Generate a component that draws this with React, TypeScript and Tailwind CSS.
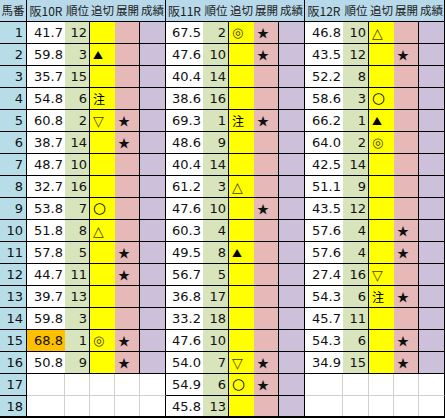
type Row = { v: string; r: string; m?: string; s?: boolean; hl?: boolean } | null;

const races: { name: string; w: string[]; rows: Row[] }[] = [
  {
    name: "阪10R",
    w: ["w-[38px]", "w-[25px]", "w-[25px]", "w-[25px]", "w-[26px]"],
    rows: [
      { v: "41.7", r: "12" },
      { v: "59.8", r: "3", m: "▲" },
      { v: "35.7", r: "15" },
      { v: "54.8", r: "6", m: "注" },
      { v: "60.8", r: "2", m: "▽", s: true },
      { v: "38.7", r: "14", s: true },
      { v: "48.7", r: "10" },
      { v: "32.7", r: "16" },
      { v: "53.8", r: "7", m: "○" },
      { v: "51.8", r: "8", m: "△" },
      { v: "57.8", r: "5", s: true },
      { v: "44.7", r: "11", s: true },
      { v: "39.7", r: "13" },
      { v: "59.8", r: "3" },
      { v: "68.8", r: "1", m: "◎", s: true, hl: true },
      { v: "50.8", r: "9", s: true },
      null,
      null,
    ],
  },
  {
    name: "阪11R",
    w: ["w-[37px]", "w-[26px]", "w-[25px]", "w-[25px]", "w-[26px]"],
    rows: [
      { v: "67.5", r: "2", m: "◎", s: true },
      { v: "47.6", r: "10", s: true },
      { v: "40.4", r: "14" },
      { v: "38.6", r: "16" },
      { v: "69.3", r: "1", m: "注", s: true },
      { v: "48.6", r: "9" },
      { v: "40.4", r: "14" },
      { v: "61.2", r: "3", m: "△" },
      { v: "47.6", r: "10", s: true },
      { v: "60.3", r: "4" },
      { v: "49.5", r: "8", m: "▲" },
      { v: "56.7", r: "5" },
      { v: "36.8", r: "17" },
      { v: "33.2", r: "18" },
      { v: "47.6", r: "10" },
      { v: "54.0", r: "7", m: "▽", s: true },
      { v: "54.9", r: "6", m: "○", s: true },
      { v: "45.8", r: "13" },
    ],
  },
  {
    name: "阪12R",
    w: ["w-[38px]", "w-[26px]", "w-[25px]", "w-[25px]", "w-[26px]"],
    rows: [
      { v: "46.8", r: "10", m: "△" },
      { v: "43.5", r: "12", s: true },
      { v: "52.2", r: "8" },
      { v: "58.6", r: "3", m: "○" },
      { v: "66.2", r: "1", m: "▲" },
      { v: "64.0", r: "2", m: "◎" },
      { v: "42.5", r: "14" },
      { v: "51.1", r: "9" },
      { v: "43.5", r: "12" },
      { v: "57.6", r: "4", s: true },
      { v: "57.6", r: "4", s: true },
      { v: "27.4", r: "16", m: "▽" },
      { v: "54.3", r: "6", m: "注", s: true },
      { v: "45.7", r: "11" },
      { v: "54.3", r: "6", s: true },
      { v: "34.9", r: "15", s: true },
      null,
      null,
    ],
  },
];

const heads = ["順位", "追切", "展開", "成績"];
const bgs = ["bg-white", "bg-[#d8e4bc]", "bg-[#ffff00]", "bg-[#e6b8b7]", "bg-[#ccc0da]"];
const rightLine = ["", "border-r border-r-black", "", "border-r border-r-black", "border-r border-r-black"];
const emptyRight = [
  "border-r border-r-[#d0d0d0]",
  "border-r border-r-[#d0d0d0]",
  "border-r border-r-[#d0d0d0]",
  "border-r border-r-[#d0d0d0]",
  "border-r border-r-black",
];

const markStyle = (m: string) => {
  if (m === "注") return "text-black text-[12px] font-['Noto_Sans_CJK_JP',sans-serif]";
  if (m === "▲") return "text-black text-[10px] font-['Noto_Sans_CJK_JP',sans-serif]";
  if (m === "◎") return "text-[#4a4200] text-[13px] font-['DejaVu_Sans',sans-serif]";
  if (m === "○") return "text-black text-[15px] font-['DejaVu_Sans',sans-serif]";
  return "text-[#4a4200] text-[14px] font-['DejaVu_Sans',sans-serif]";
};

export default function App() {
  return (
    <div className="w-[445px] h-[418px] bg-white font-['DejaVu_Sans','Noto_Sans_CJK_JP',sans-serif] text-[13px] text-[#111] leading-none">
      <div className="flex flex-col border-b-2 border-black w-[445px]">
        {/* header */}
        <div className="flex h-[22px] bg-[#b7d9ea] border-b border-black font-['Noto_Sans_CJK_JP',sans-serif] text-[11.5px] text-[#222]">
          <div className="w-[27px] shrink-0 flex items-center justify-center overflow-hidden whitespace-nowrap border-r border-black">
            馬番
          </div>
          {races.map((race) =>
            [race.name, ...heads].map((h, i) => (
              <div
                key={race.name + h}
                className={`${race.w[i]} shrink-0 flex items-center justify-center overflow-hidden whitespace-nowrap ${
                  i === 4 ? "border-r border-black" : ""
                } ${i === 0 ? "text-[12px]" : ""}`}
              >
                {h}
              </div>
            ))
          )}
        </div>

        {Array.from({ length: 18 }, (_, ri) => {
          const last = ri === 17;
          return (
            <div key={ri} className={`flex ${last ? "h-[20px]" : "h-[22px]"}`}>
              <div
                className={`w-[27px] shrink-0 bg-[#b7dee8] flex items-center justify-end pr-[3px] border-r border-black ${
                  last ? "" : "border-b border-b-black"
                }`}
              >
                {ri + 1}
              </div>
              {races.map((race) => {
                const row = race.rows[ri];
                if (!row) {
                  return race.w.map((w, i) => (
                    <div
                      key={race.name + i}
                      className={`${w} shrink-0 bg-white ${emptyRight[i]} ${
                        last ? "" : "border-b border-b-[#d0d0d0]"
                      }`}
                    />
                  ));
                }
                const base = `shrink-0 flex items-center ${last ? "" : "border-b border-b-black"}`;
                return [
                  <div
                    key={race.name + "v"}
                    className={`${race.w[0]} ${base} justify-end pr-[2px] ${row.hl ? "bg-[#ffc000]" : bgs[0]} ${rightLine[0]}`}
                  >
                    {row.v}
                  </div>,
                  <div
                    key={race.name + "r"}
                    className={`${race.w[1]} ${base} justify-end pr-[2px] ${bgs[1]} ${rightLine[1]}`}
                  >
                    {row.r}
                  </div>,
                  <div
                    key={race.name + "m"}
                    className={`${race.w[2]} ${base} pl-[3px] ${bgs[2]} ${rightLine[2]}`}
                  >
                    {row.m && <span className={markStyle(row.m)}>{row.m}</span>}
                  </div>,
                  <div
                    key={race.name + "s"}
                    className={`${race.w[3]} ${base} pl-[3px] ${bgs[3]} ${rightLine[3]} font-['Noto_Sans_CJK_JP',sans-serif] text-[12px]`}
                  >
                    {row.s && "★"}
                  </div>,
                  <div key={race.name + "g"} className={`${race.w[4]} ${base} ${bgs[4]} ${rightLine[4]}`} />,
                ];
              })}
            </div>
          );
        })}
      </div>
    </div>
  );
}
